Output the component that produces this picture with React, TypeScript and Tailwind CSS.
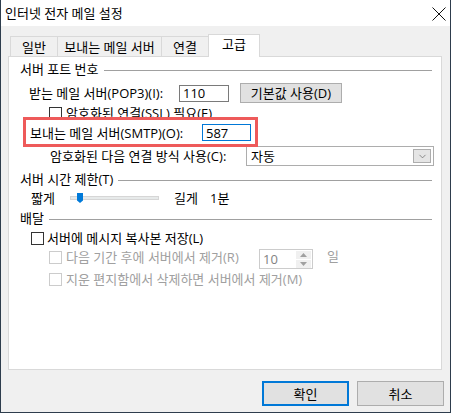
import { ChevronDown } from "lucide-react";

const tabs = [
  { label: "일반", width: "w-[47px]" },
  { label: "보내는 메일 서버", width: "w-[104px]" },
  { label: "연결", width: "w-[47px]" },
];

function GroupHeader({ title, className }: { title: string; className?: string }) {
  return (
    <div className={`flex h-[14px] pl-[11px] pr-[9px] gap-[5px] ${className ?? ""}`}>
      <span className="leading-[14px] whitespace-nowrap">{title}</span>
      <div className="flex-1 h-px bg-[#a0a0a0] mt-[8px]"></div>
    </div>
  );
}

function CheckBox({ disabled = false, className }: { disabled?: boolean; className?: string }) {
  return (
    <div
      className={`w-[13px] h-[13px] shrink-0 bg-white border ${
        disabled ? "border-[#cccccc]" : "border-[#333333]"
      } ${className ?? ""}`}
    ></div>
  );
}

export default function App() {
  return (
    <div className="w-[451px] h-[413px] bg-[#2e3d4d] font-['Open_Sans','Noto_Sans_CJK_KR',sans-serif] text-[13px] text-black overflow-hidden">
      <div className="ml-px w-[449px] h-[412px] flex flex-col bg-[#f0f0f0]">
        {/* title bar */}
        <div className="h-[26px] bg-white flex items-center justify-between pl-[4px] pr-[4px]">
          <span className="leading-[14px]">인터넷 전자 메일 설정</span>
          <svg width="14" height="14" viewBox="0 0 14 14" className="mt-px">
            <path d="M0.5 0.5 L13.5 13.5 M13.5 0.5 L0.5 13.5" stroke="#111" strokeWidth="1" fill="none" />
          </svg>
        </div>

        <div className="flex flex-col pl-[7px]">
          {/* tabs */}
          <div className="flex items-end h-[22px] mt-[8px] pl-[2px]">
            {tabs.map((t) => (
              <div
                key={t.label}
                className={`${t.width} h-[20px] border-t border-l border-[#d9d9d9] flex items-center justify-center leading-[14px] whitespace-nowrap`}
              >
                {t.label}
              </div>
            ))}
            <div className="w-[52px] h-[23px] -mb-px relative z-10 bg-white border-t border-l border-r border-[#d9d9d9] flex items-center justify-center pb-[4px] leading-[14px]">
              고급
            </div>
          </div>

          {/* panel */}
          <div className="relative w-[434px] h-[314px] bg-white border border-[#d9d9d9] flex flex-col">
            <GroupHeader title="서버 포트 번호" className="mt-[5px]" />

            <div className="flex items-center h-[20px] mt-[7px] pl-[20px]">
              <span className="w-[150px] leading-[14px] whitespace-nowrap">받는 메일 서버(POP3)(I):</span>
              <div className="w-[50px] h-[17px] border border-[#7a7a7a] bg-white flex items-center pl-[3px] leading-[14px]">
                110
              </div>
              <div className="ml-[11px] w-[102px] h-[20px] bg-[#e1e1e1] border border-[#adadad] flex items-center justify-center leading-[14px]">
                기본값 사용(D)
              </div>
            </div>

            <div className="flex items-center h-[14px] mt-[3px] pl-[40px] gap-[4px]">
              <CheckBox />
              <span className="leading-[14px] whitespace-nowrap">암호화된 연결(SSL) 필요(E)</span>
            </div>

            <div className="flex items-center h-[17px] mt-[4px] pl-[21px]">
              <span className="w-[172px] leading-[14px] whitespace-nowrap">보내는 메일 서버(SMTP)(O):</span>
              <div className="w-[49px] h-[17px] border border-[#0078d7] bg-white flex items-center pl-[3px] leading-[14px]">
                587
              </div>
            </div>

            <div className="flex items-center h-[20px] mt-[5px] pl-[41px]">
              <span className="w-[196px] leading-[14px] whitespace-nowrap">암호화된 다음 연결 방식 사용(C):</span>
              <div className="w-[188px] h-[20px] border border-[#adadad] bg-white flex items-center justify-between pl-[4px] pr-[2px]">
                <span className="leading-[14px]">자동</span>
                <div className="w-[18px] h-[14px] bg-[#e5e5e5] border border-[#adadad] flex items-center justify-center">
                  <ChevronDown size={11} strokeWidth={1.5} color="#606060" />
                </div>
              </div>
            </div>

            <GroupHeader title="서버 시간 제한(T)" className="mt-[6px]" />

            <div className="flex items-center h-[14px] mt-[5px] pl-[22px]">
              <span className="w-[39px] leading-[14px]">짧게</span>
              <div className="relative w-[89px] h-[4px] bg-[#e7eaea] border border-[#d6d6d6]">
                <svg width="6" height="10" viewBox="0 0 6 10" className="absolute left-[6px] top-[-4px]">
                  <path d="M0 0 H6 V7.5 L3 10 L0 7.5 Z" fill="#007ad9" />
                </svg>
              </div>
              <span className="ml-[15px] w-[36px] leading-[14px]">길게</span>
              <span className="leading-[14px]">1분</span>
            </div>

            <GroupHeader title="배달" className="mt-[6px]" />

            <div className="flex items-center h-[14px] mt-[6px] pl-[22px] gap-[3px]">
              <CheckBox />
              <span className="leading-[14px] whitespace-nowrap">서버에 메시지 복사본 저장(L)</span>
            </div>

            <div className="flex items-start h-[20px] mt-[4px] pl-[40px] text-[#a0a0a0]">
              <CheckBox disabled className="mt-[2px]" />
              <span className="ml-[4px] w-[193px] h-[14px] mt-[1px] leading-[14px] whitespace-nowrap">
                다음 기간 후에 서버에서 제거(R)
              </span>
              <div className="w-[54px] h-[20px] border border-[#cccccc] bg-white flex items-center justify-between pl-[3px] pr-px text-[#838383]">
                <span className="leading-[14px]">10</span>
                <div className="w-[15px] h-[17px] flex flex-col gap-px">
                  <div className="flex-1 bg-[#f0f0f0] flex items-center justify-center">
                    <svg width="7" height="4" viewBox="0 0 7 4">
                      <path d="M0 4 L3.5 0 L7 4 Z" fill="#a0a0a0" />
                    </svg>
                  </div>
                  <div className="flex-1 bg-[#f0f0f0] flex items-center justify-center">
                    <svg width="7" height="4" viewBox="0 0 7 4">
                      <path d="M0 0 L7 0 L3.5 4 Z" fill="#a0a0a0" />
                    </svg>
                  </div>
                </div>
              </div>
              <span className="ml-[14px] leading-[14px]">일</span>
            </div>

            <div className="flex items-center h-[14px] mt-[3px] pl-[40px] gap-[4px] text-[#a0a0a0]">
              <CheckBox disabled />
              <span className="leading-[14px] whitespace-nowrap">지운 편지함에서 삭제하면 서버에서 제거(M)</span>
            </div>

            {/* highlight annotation */}
            <div className="absolute left-[14px] top-[60px] w-[235px] h-[30px] border-[3px] border-[#ee5a5a]"></div>
          </div>

          {/* dialog buttons */}
          <div className="flex justify-end gap-[8px] mt-[11px] pr-[6px]">
            <div className="w-[87px] h-[25px] bg-[#e1e1e1] border-2 border-[#0078d7] flex items-center justify-center leading-[14px]">
              확인
            </div>
            <div className="w-[87px] h-[25px] bg-[#e1e1e1] border border-[#adadad] flex items-center justify-center leading-[14px]">
              취소
            </div>
          </div>
        </div>
      </div>
    </div>
  );
}
